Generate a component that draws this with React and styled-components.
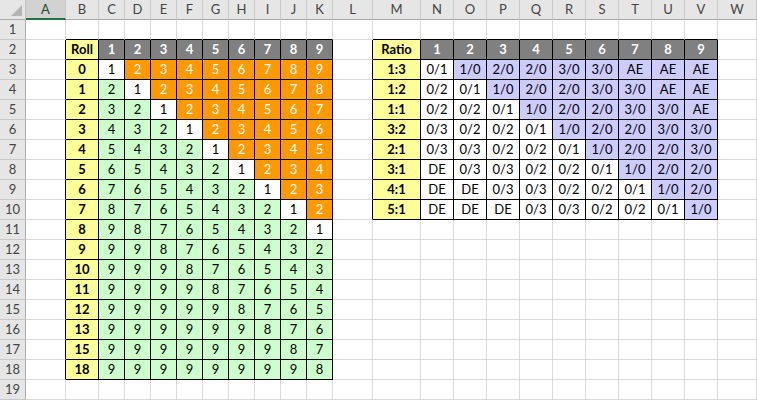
import styled, { createGlobalStyle } from "styled-components";

const GlobalStyle = createGlobalStyle`
  html, body {
    margin: 0;
    padding: 0;
    background: #ffffff;
    overflow: hidden;
  }
`;

const COLUMNS = "ABCDEFGHIJKLMNOPQRSTUVW".split("");
const ROWS = 19;

const ROLLS = ["0", "1", "2", "3", "4", "5", "6", "7", "8", "9", "10", "11", "12", "13", "15", "18"];
const ROLL_VALUES = [
  "123456789", "212345678", "321234567", "432123456", "543212345", "654321234",
  "765432123", "876543212", "987654321", "998765432", "999876543", "999987654",
  "999998765", "999999876", "999999987", "999999998",
];

const RATIOS = ["1:3", "1:2", "1:1", "3:2", "2:1", "3:1", "4:1", "5:1"];
const RATIO_VALUES = [
  ["0/1", "1/0", "2/0", "2/0", "3/0", "3/0", "AE", "AE", "AE"],
  ["0/2", "0/1", "1/0", "2/0", "2/0", "3/0", "3/0", "AE", "AE"],
  ["0/2", "0/2", "0/1", "1/0", "2/0", "2/0", "3/0", "3/0", "AE"],
  ["0/3", "0/2", "0/2", "0/1", "1/0", "2/0", "2/0", "3/0", "3/0"],
  ["0/3", "0/3", "0/2", "0/2", "0/1", "1/0", "2/0", "2/0", "3/0"],
  ["DE", "0/3", "0/3", "0/2", "0/2", "0/1", "1/0", "2/0", "2/0"],
  ["DE", "DE", "0/3", "0/3", "0/2", "0/2", "0/1", "1/0", "2/0"],
  ["DE", "DE", "DE", "0/3", "0/3", "0/2", "0/2", "0/1", "1/0"],
];

const FILLS = {
  label: { bg: "#ffff99", color: "#000", bold: true },
  head: { bg: "#808080", color: "#fff", bold: true },
  white: { bg: "#ffffff", color: "#000" },
  orange: { bg: "#ff9900", color: "#fff" },
  green: { bg: "#ccffcc", color: "#000" },
  lav: { bg: "#ccccff", color: "#000" },
};

// column index: A = 0
const inLeft = (r, c) => r >= 2 && r <= 18 && c >= 1 && c <= 10;
const inRight = (r, c) => r >= 2 && r <= 10 && c >= 12 && c <= 21;
const inTable = (r, c) => inLeft(r, c) || inRight(r, c);

function cellAt(r, c) {
  if (inLeft(r, c)) {
    if (r === 2) return c === 1 ? { text: "Roll", kind: "label" } : { text: String(c - 1), kind: "head" };
    const i = r - 3;
    if (c === 1) return { text: ROLLS[i], kind: "label" };
    const k = c - 2;
    const kind = k === i ? "white" : k > i ? "orange" : "green";
    return { text: ROLL_VALUES[i][k], kind };
  }
  if (inRight(r, c)) {
    if (r === 2) return c === 12 ? { text: "Ratio", kind: "label" } : { text: String(c - 12), kind: "head" };
    const i = r - 3;
    if (c === 12) return { text: RATIOS[i], kind: "label" };
    const k = c - 13;
    return { text: RATIO_VALUES[i][k], kind: k > i ? "lav" : "white" };
  }
  return null;
}

const Sheet = styled.div`
  display: grid;
  grid-template-columns: 26px 40px 33px repeat(9, 26px) 40px 48px repeat(9, 33px) 1fr;
  grid-auto-rows: 20px;
  width: 757px;
  height: 400px;
  overflow: hidden;
  font-family: Lato, "Liberation Sans", sans-serif;
`;

const Corner = styled.div`
  box-sizing: border-box;
  background: #e6e6e6;
  border-right: 1px solid #c4c4c4;
  border-bottom: 1px solid #ababab;
  display: flex;
  align-items: flex-end;
  justify-content: flex-end;
  padding: 0 3px 3px 0;

  svg {
    display: block;
  }
`;

const ColHead = styled.div`
  box-sizing: border-box;
  background: ${(p) => (p.$selected ? "#d2d2d2" : "#e6e6e6")};
  border-right: 1px solid #c8c8c8;
  border-bottom: ${(p) => (p.$selected ? "2px solid #217346" : "1px solid #ababab")};
  color: ${(p) => (p.$selected ? "#1b4d30" : "#444")};
  font-size: 13px;
  line-height: 19px;
  text-align: center;
`;

const RowHead = styled.div`
  box-sizing: border-box;
  background: #e6e6e6;
  border-right: 1px solid #ababab;
  border-bottom: 1px solid #c8c8c8;
  color: #444;
  font-size: 13px;
  line-height: 19px;
  text-align: center;
`;

const Cell = styled.div`
  box-sizing: border-box;
  background: ${(p) => p.$bg};
  color: ${(p) => p.$color};
  font-weight: ${(p) => (p.$bold ? 700 : 400)};
  border-right: 1px solid ${(p) => (p.$edgeRight ? "#000" : "#d9d9d9")};
  border-bottom: 1px solid ${(p) => (p.$edgeBottom ? "#000" : "#d9d9d9")};
  font-size: 13px;
  line-height: 19px;
  text-align: center;
  white-space: nowrap;
  overflow: hidden;
`;

const App = () => {
  const rows = [];
  for (let r = 1; r <= ROWS; r++) {
    rows.push(<RowHead key={`h${r}`}>{r}</RowHead>);
    COLUMNS.forEach((_, c) => {
      const cell = cellAt(r, c);
      const fill = cell ? FILLS[cell.kind] : FILLS.white;
      rows.push(
        <Cell
          key={`${r}-${c}`}
          $bg={fill.bg}
          $color={fill.color}
          $bold={fill.bold}
          $edgeRight={inTable(r, c) || inTable(r, c + 1)}
          $edgeBottom={inTable(r, c) || inTable(r + 1, c)}
        >
          {cell ? cell.text : ""}
        </Cell>
      );
    });
  }

  return (
    <>
      <GlobalStyle />
      <Sheet>
        <Corner>
          <svg width="11" height="11" viewBox="0 0 11 11">
            <polygon points="11,0 11,11 0,11" fill="#b4b4b4" />
          </svg>
        </Corner>
        {COLUMNS.map((letter, i) => (
          <ColHead key={letter} $selected={i === 0}>
            {letter}
          </ColHead>
        ))}
        {rows}
      </Sheet>
    </>
  );
};

export default App;
